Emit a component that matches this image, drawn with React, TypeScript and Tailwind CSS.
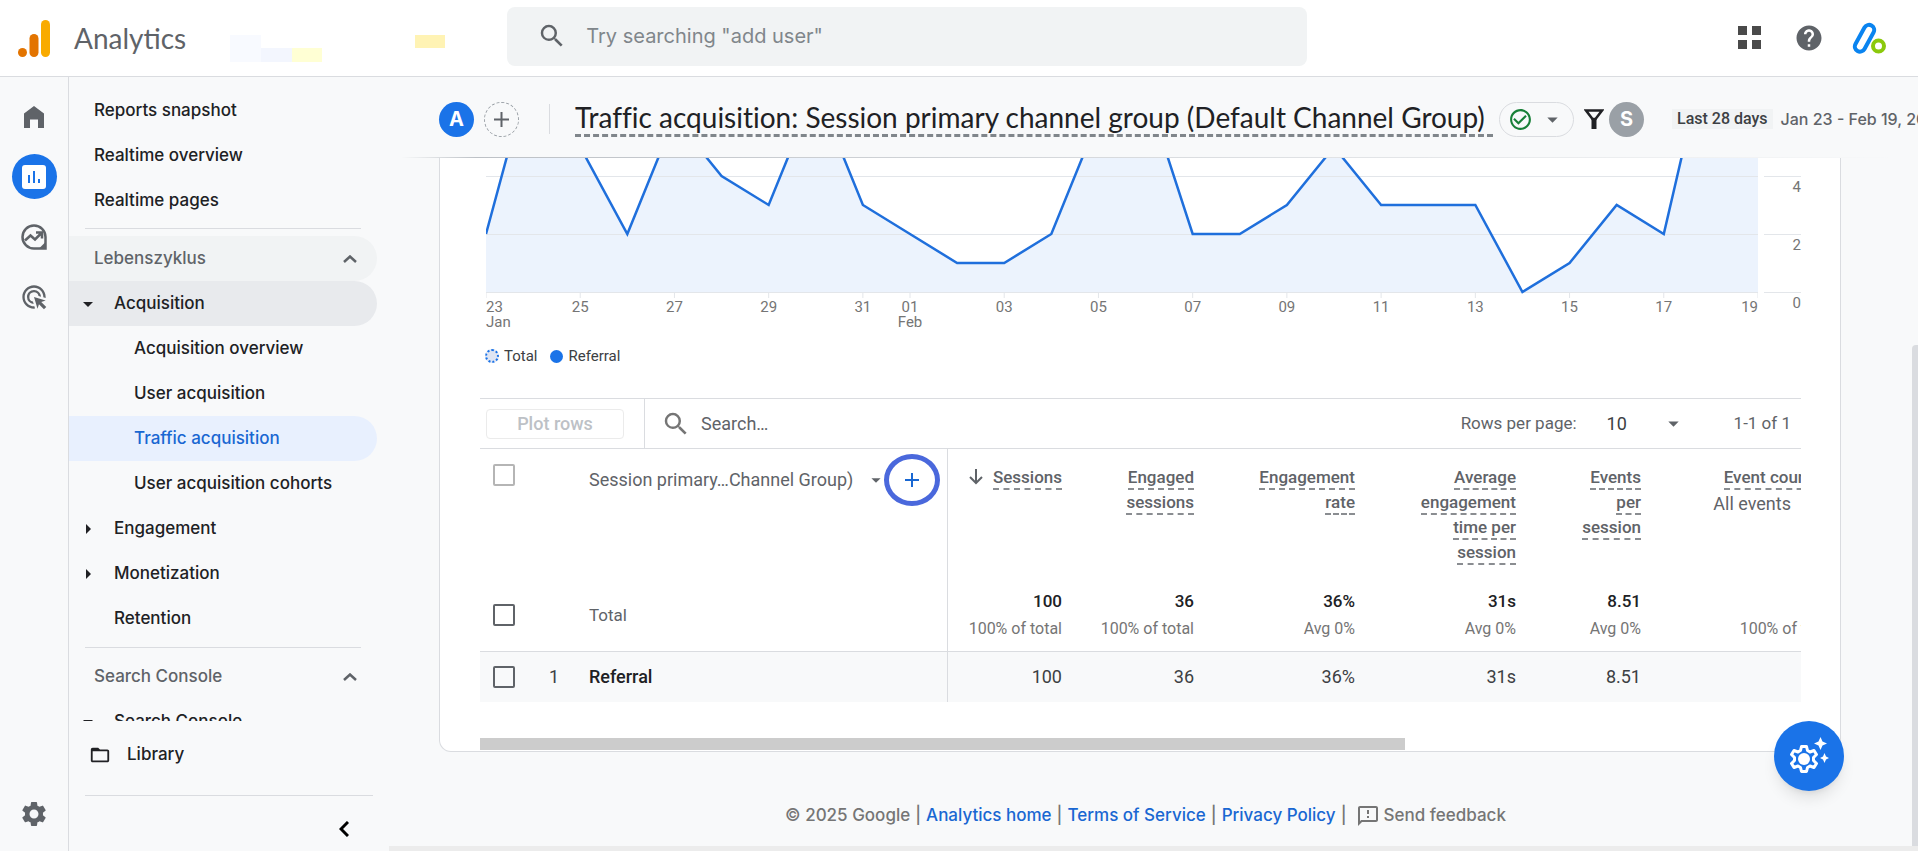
import { Fragment } from "react";
import { MdAdsClick, MdArrowDropDown, MdArrowRight, MdCheckCircleOutline, MdFolderOpen, MdHelp, MdOutlineFeedback, MdSearch, MdSettings } from "react-icons/md";

// sessions per day, Jan 23 - Feb 19
const sessions = [2, 8, 5, 2, 6, 4, 3, 7, 3, 2, 1, 1, 2, 6, 7, 2, 2, 3, 5, 3, 3, 3, 0, 1, 3, 2, 9, 7];

const UNIT = 29; // px per session
const BASE = 134; // y of the zero line

const ticks = [
    { day: 0, label: "23", month: "Jan" },
    { day: 2, label: "25" },
    { day: 4, label: "27" },
    { day: 6, label: "29" },
    { day: 8, label: "31" },
    { day: 9, label: "01", month: "Feb" },
    { day: 11, label: "03" },
    { day: 13, label: "05" },
    { day: 15, label: "07" },
    { day: 17, label: "09" },
    { day: 19, label: "11" },
    { day: 21, label: "13" },
    { day: 23, label: "15" },
    { day: 25, label: "17" },
    { day: 27, label: "19" },
];

const columns = [
    { title: ["Sessions"], total: "100", note: "100% of total", value: "100", width: "w-[115px]", sorted: true },
    { title: ["Engaged", "sessions"], total: "36", note: "100% of total", value: "36", width: "w-[132px]" },
    { title: ["Engagement", "rate"], total: "36%", note: "Avg 0%", value: "36%", width: "w-[161px]" },
    { title: ["Average", "engagement", "time per", "session"], total: "31s", note: "Avg 0%", value: "31s", width: "w-[161px]" },
    { title: ["Events", "per", "session"], total: "8.51", note: "Avg 0%", value: "8.51", width: "w-[125px]" },
];

const HomeIcon = () => (
    <svg viewBox="0 0 20 22" className="w-5 h-[22px]" fill="#5f6368">
        <path d="M0 22V7.500L10 0l10 7.500V22h-6v-8.500H6V22z" />
    </svg>
);

const ReportsIcon = () => (
    <svg viewBox="0 0 24 24" className="w-6 h-6">
        <rect width="24" height="24" rx="3" fill="#fff" />
        <path d="M7 10v8M12 6v12M17 14v4" stroke="#1a73e8" strokeWidth="2" />
    </svg>
);

const ExploreIcon = () => (
    <svg viewBox="0 0 26 26" className="w-[26px] h-[26px]" fill="none" stroke="#5f6368" strokeWidth="2.500">
        <path d="M24.500 13A11.500 11.500 0 1 0 13 24.500h11.500z" />
        <path d="M4 16.500l5.500-5 4.500 4L20.500 9M15 8.500h6v6" />
        <path d="M18 24.500l6.500-6.500v6.500z" fill="#5f6368" stroke="none" />
    </svg>
);

const ChevronUp = () => (
    <svg viewBox="0 0 14 8" className="w-[14px] h-2" fill="none" stroke="#5f6368" strokeWidth="2.500">
        <path d="M1 7l6-5.500L13 7" />
    </svg>
);

const Logo = () => (
    <svg viewBox="0 0 32 37" className="w-8 h-[37px]">
        <rect x="23" width="9" height="37" rx="4.500" fill="#f9ab00" />
        <rect x="11.500" y="14" width="9" height="23" rx="4.500" fill="#e37400" />
        <circle cx="4.500" cy="32.500" r="4.500" fill="#e37400" />
    </svg>
);

const AccountLogo = () => (
    <svg viewBox="0 0 34 32" className="w-[34px] h-8" fill="none" strokeWidth="4">
        <path d="M12.500 5.500a5 5 0 0 1 9 5L12.500 27a5 5 0 0 1-9-5z" stroke="#0a84f0" />
        <circle cx="26.500" cy="24" r="5.500" stroke="#8bc90c" fill="#fff" />
    </svg>
);

const FunnelIcon = () => (
    <svg viewBox="0 0 20 20" className="w-5 h-5" fill="none" stroke="#202124" strokeWidth="2.500">
        <path d="M2 1.500h16l-6.500 8.500h-3z" />
        <path d="M10 9v11" strokeWidth="5" />
    </svg>
);

const InsightsIcon = () => (
    <svg viewBox="0 0 40 38" className="w-10 h-[38px]" fill="#fff">
        <path
            d="M12.500 9.500h5l1 4 2.500 1.500 4-1.500 2.500 4-3 3v3l3 3-2.500 4-4-1.500-2.500 1.500-1 4h-5l-1-4L9 29l-4 1.500-2.500-4 3-3v-3l-3-3L5 13.500 9 15l2.500-1.500z"
            fill="none"
            stroke="#fff"
            strokeWidth="3"
            strokeLinejoin="round"
        />
        <circle cx="15" cy="22" r="6" />
        <path d="M31.500 0l2 4.500 4.500 2-4.500 2-2 4.500-2-4.500-4.500-2 4.500-2zM35.500 16l1.500 3.500 3 1.500-3 1.500-1.500 3.500-1.500-3.500-3-1.500 3-1.500z" />
    </svg>
);

const Checkbox = ({ label, muted }: { label: string; muted?: boolean }) => (
    <input
        type="checkbox"
        aria-label={label}
        className={`block appearance-none w-[22px] h-[22px] border-2 rounded-xs ${muted ? "border-[#b5b5b5]" : "border-[#5f6368]"}`}
    />
);

const NavItem = ({ text, className = "", arrow }: { text: string; className?: string; arrow?: "down" | "right" }) => (
    <a href="#" className={`flex items-center shrink-0 h-[45px] mr-3 rounded-r-full ${className}`}>
        {arrow && (
            <span className="w-[45px] pl-[7px]">
                {arrow === "down" ? <MdArrowDropDown size={24} /> : <MdArrowRight size={24} />}
            </span>
        )}
        {text}
    </a>
);

const Header = () => (
    <header className="flex items-center shrink-0 h-[77px] bg-white border-b border-[#dadce0] px-[18px]">
        <Logo />
        <span className="ml-6 pb-px text-[28px] text-[#5f6368] font-['Lato',sans-serif]">Analytics</span>
        <div className="grid grid-cols-7 w-[215px] h-[27px] ml-11 mt-5" aria-hidden="true">
            <span className="bg-[#f8faff]" />
            <span className="col-span-5" />
            <span className="bg-[#fff3b4]" />
            <span className="bg-[#f8faff]" />
            <span className="bg-[#f3f6fe]" />
            <span className="bg-[#ffffd4]" />
        </div>
        <label className="flex items-center w-[800px] h-[59px] ml-[62px] mb-1 bg-[#f1f3f4] rounded-lg px-[30px]">
            <MdSearch size={30} className="text-[#5f6368]" />
            <input
                type="text"
                aria-label="Search"
                placeholder={'Try searching "add user"'}
                className="flex-1 ml-[19px] text-xl bg-transparent outline-none placeholder:text-[#80868b]"
            />
        </label>
        <div className="flex items-center gap-7 ml-auto mr-[14px] pb-px">
            <button aria-label="Apps" className="flex justify-center w-[34px]">
                <svg viewBox="0 0 23 23" className="w-[23px] h-[23px]" fill="#4a4a4a">
                    <path d="M0 0h9v9H0zM14 0h9v9h-9zM0 14h9v9H0zM14 14h9v9h-9z" />
                </svg>
            </button>
            <button aria-label="Help">
                <MdHelp size={30} className="text-[#5f6368]" />
            </button>
            <button aria-label="Account">
                <AccountLogo />
            </button>
        </div>
    </header>
);

const Rail = () => (
    <nav className="flex flex-col items-center shrink-0 w-[69px] border-r border-[#dadce0] pt-[17px] pb-[22px]">
        <a href="#" aria-label="Home" className="flex items-center justify-center h-[45px]"><HomeIcon /></a>
        <a href="#" aria-label="Reports" className="flex items-center justify-center w-[45px] h-[45px] mt-[15px] rounded-full bg-[#1a73e8]"><ReportsIcon /></a>
        <a href="#" aria-label="Explore" className="flex items-center justify-center h-[45px] mt-[15px]"><ExploreIcon /></a>
        <a href="#" aria-label="Advertising" className="flex items-center justify-center h-[45px] mt-[15px] text-[#5f6368]"><MdAdsClick size={28} /></a>
        <a href="#" aria-label="Admin" className="mt-auto text-[#5f6368]"><MdSettings size={30} /></a>
    </nav>
);

const Sidebar = () => (
    <aside className="flex flex-col shrink-0 w-[320px] text-[17px] text-[#202124] font-medium">
        <div className="flex flex-col flex-1 min-h-0 overflow-hidden pt-[11px]">
            <NavItem text="Reports snapshot" className="pl-[25px]" />
            <NavItem text="Realtime overview" className="pl-[25px]" />
            <NavItem text="Realtime pages" className="pl-[25px]" />
            <hr className="shrink-0 border-[#dadce0] ml-4 mr-7 mt-[5px] mb-[7px]" />
            <button className="flex items-center justify-between shrink-0 h-[45px] mr-3 pl-[25px] pr-5 rounded-r-full bg-[#f1f3f4] text-[#5f6368]">
                Lebenszyklus <ChevronUp />
            </button>
            <NavItem text="Acquisition" arrow="down" className="bg-[#e8eaed]" />
            <NavItem text="Acquisition overview" className="pl-[65px]" />
            <NavItem text="User acquisition" className="pl-[65px]" />
            <NavItem text="Traffic acquisition" className="pl-[65px] bg-[#e8f0fe] text-[#1967d2]" />
            <NavItem text="User acquisition cohorts" className="pl-[65px]" />
            <NavItem text="Engagement" arrow="right" />
            <NavItem text="Monetization" arrow="right" />
            <NavItem text="Retention" className="pl-[45px]" />
            <hr className="shrink-0 border-[#dadce0] ml-4 mr-7 mt-[6px] mb-[6px]" />
            <button className="flex items-center justify-between shrink-0 h-[45px] mr-3 pl-[25px] pr-5 text-[#5f6368]">
                Search Console <ChevronUp />
            </button>
            <NavItem text="Search Console" arrow="down" />
        </div>
        <a href="#" className="flex items-center shrink-0 gap-4 h-[66px] pl-5 pt-px">
            <MdFolderOpen size={22} /> Library
        </a>
        <div className="shrink-0 h-14 mt-2 ml-4 mr-4 border-t border-[#dadce0]">
            <button aria-label="Collapse navigation" className="block ml-auto mr-6 mt-[25px]">
                <svg viewBox="0 0 10 16" className="w-[10px] h-4" fill="none" stroke="#000" strokeWidth="3">
                    <path d="M9 1L2 8l7 7" />
                </svg>
            </button>
        </div>
    </aside>
);

const ReportHeader = () => (
    <div className="shrink-0 bg-[#f8f9fa]">
        <div className="flex items-center h-20 pt-1 pl-[50px] whitespace-nowrap overflow-hidden">
            <span className="flex items-center justify-center shrink-0 w-[35px] h-[35px] rounded-full bg-[#1a73e8] text-white text-xl font-bold">A</span>
            <button aria-label="Add comparison" className="flex items-center justify-center shrink-0 w-[35px] h-[35px] ml-[10px] rounded-full border border-dashed border-[#9aa0a6]">
                <svg viewBox="0 0 15 15" className="w-[15px] h-[15px]" stroke="#5f6368" strokeWidth="2">
                    <path d="M7.500 0v15M0 7.500h15" />
                </svg>
            </button>
            <span className="shrink-0 w-px h-[30px] ml-[30px] mr-[25px] bg-[#dadce0]" />
            <h1 className="shrink-0 min-w-[918px] text-[28px] leading-[33px] text-[#202124] border-b-3 border-dashed border-[#80868b] font-['Lato',sans-serif] [font-variant-ligatures:none]">
                Traffic acquisition: Session primary channel group (Default Channel Group)
            </h1>
            <button aria-label="Report status" className="flex items-center justify-between shrink-0 w-[75px] h-[35px] ml-[6px] pl-2 pr-2 rounded-full border border-[#dadce0] text-[#5f6368]">
                <MdCheckCircleOutline size={25} className="text-[#188038]" />
                <MdArrowDropDown size={25} />
            </button>
            <button aria-label="Filter" className="shrink-0 ml-[10px]"><FunnelIcon /></button>
            <span className="flex items-center justify-center shrink-0 w-[35px] h-[35px] ml-[5px] rounded-full bg-[#9aa0a6] text-white text-xl font-bold">S</span>
            <span className="shrink-0 ml-7 px-[5px] bg-[#f1f3f4] text-base leading-5 font-medium text-[#3c4043] font-['Roboto',sans-serif]">Last 28 days</span>
            <span className="shrink-0 ml-2 text-base font-medium text-[#5f6368]">Jan 23 - Feb 19, 2025</span>
        </div>
        <div className="h-px ml-3 mr-5 bg-linear-to-r from-transparent via-[#bdc1c6] via-5% to-transparent" />
    </div>
);

const Chart = () => {
    const last = sessions.length - 1;
    const line = sessions.map((v, i) => `${i},${BASE - v * UNIT}`).join(" ");

    return (
        <div className="flex gap-[6px] ml-[6px]">
            <div className="flex-1">
                <svg viewBox={`0 0 ${last} 140`} preserveAspectRatio="none" className="block w-full h-[140px]">
                    <polygon points={`0,${BASE} ${line} ${last},${BASE}`} fill="#ecf3fd" />
                    {[0, 2, 4].map((v) => (
                        <path key={v} d={`M0 ${BASE - v * UNIT}.5H${last}`} stroke="#e3e6ea" vectorEffect="non-scaling-stroke" />
                    ))}
                    {ticks.map((t) => (
                        <path key={t.day} d={`M${t.day} ${BASE}v6`} stroke="#e3e6ea" vectorEffect="non-scaling-stroke" />
                    ))}
                    <polyline points={line} fill="none" stroke="#1f6fdc" strokeWidth="2.500" vectorEffect="non-scaling-stroke" />
                </svg>
                <div className="relative h-10 text-[15px] leading-[15px] text-[#757575]">
                    {ticks.map((t) => (
                        <span
                            key={t.day}
                            className={`absolute top-[2px] ${t.day === 0 ? "text-left" : t.day === last ? "-translate-x-full" : "-translate-x-1/2 text-center"}`}
                            style={{ left: `${(t.day / last) * 100}%` }}
                        >
                            {t.label}
                            {t.month && <><br />{t.month}</>}
                        </span>
                    ))}
                </div>
            </div>
            <div className="w-[37px] pt-[18px] text-right text-[15px] leading-[21px] text-[#757575]">
                <div className="h-[58px] border-t border-[#e3e6ea]">4</div>
                <div className="h-[58px] border-t border-[#e3e6ea]">2</div>
                <div className="border-t border-[#e3e6ea]">0</div>
            </div>
        </div>
    );
};

const Underlined = ({ text }: { text: string }) => (
    <span className="border-b-2 border-dashed border-[#8a8d91] pb-px">{text}</span>
);

const DataTable = () => (
    <table className="w-[calc(100%+32px)] table-fixed border-collapse text-[#3c4043]">
        <thead>
            <tr className="align-top text-[17px] leading-[25px] text-[#5f6368]">
                <th className="w-[52px] pt-[15px] pl-[13px]"><Checkbox label="Select all" muted /></th>
                <th className="w-[57px]"></th>
                <th className="w-[358px] h-[131px] border-r border-[#dadce0] font-normal">
                    <div className="flex items-center pt-[5px]">
                        <button className="text-left whitespace-nowrap text-lg">Session primary…Channel Group)</button>
                        <MdArrowDropDown size={22} className="ml-auto" />
                        <button aria-label="Add dimension" className="flex items-center justify-center w-[56px] h-[52px] mr-[7px] -ml-[3px] rounded-[50%] border-5 border-[#4a68dc]">
                            <svg viewBox="0 0 14 14" className="w-[14px] h-[14px]" stroke="#1967d2" strokeWidth="2">
                                <path d="M7 0v14M0 7h14" />
                            </svg>
                        </button>
                    </div>
                </th>
                {columns.map((c) => (
                    <th key={c.title.join(" ")} className={`${c.width} pt-4 text-right font-medium`}>
                        {c.title.map((l, i) => (
                            <Fragment key={l}>
                                {i > 0 && <br />}
                                {c.sorted && (
                                    <svg viewBox="0 0 14 16" className="inline w-[14px] h-4 mr-[10px] mb-1" fill="none" stroke="#5f6368" strokeWidth="2">
                                        <path d="M7 0v14M1 8l6 6 6-6" />
                                    </svg>
                                )}
                                <Underlined text={l} />
                            </Fragment>
                        ))}
                    </th>
                ))}
                <th className="pt-4 text-right font-medium">
                    <div className="pr-5"><Underlined text="Event count" /></div>
                    <div className="pr-[42px] pt-px text-lg leading-[25px] font-normal">All events</div>
                </th>
            </tr>
        </thead>
        <tbody>
            <tr className="h-[71px] border-b border-[#dadce0]">
                <td className="pl-[13px]"><Checkbox label="Select total" /></td>
                <td></td>
                <td className="border-r border-[#dadce0] text-[17px] text-[#5f6368]">Total</td>
                {columns.map((c) => (
                    <td key={c.title.join(" ")} className="text-right whitespace-nowrap">
                        <div className="text-[17px] leading-7 font-medium text-[#202124]">{c.total}</div>
                        <div className="text-base leading-7 text-[#757575]">{c.note}</div>
                    </td>
                ))}
                <td className="text-right whitespace-nowrap">
                    <div className="text-[17px] leading-7 font-medium text-[#202124]">100</div>
                    <div className="text-base leading-7 text-[#757575]">100% of total</div>
                </td>
            </tr>
            <tr className="h-[51px] bg-[#f8f9fa] text-lg">
                <td className="pl-[13px]"><Checkbox label="Select row 1" /></td>
                <td className="pl-[17px]">1</td>
                <td className="border-r border-[#dadce0] font-medium text-[#202124]">Referral</td>
                {columns.map((c) => (
                    <td key={c.title.join(" ")} className="text-right">{c.value}</td>
                ))}
                <td className="text-right">100</td>
            </tr>
        </tbody>
    </table>
);

const ReportCard = () => (
    <section className="bg-white border border-t-0 border-[#dadce0] rounded-b-xl ml-[50px] mr-[77px] pl-10 pr-[39px] font-['Roboto',sans-serif]">
        <Chart />
        <div className="flex items-center gap-3 ml-[5px] mt-[8px] text-[15px] leading-5 text-[#3c4043]">
            <span className="flex items-center gap-[5px]">
                <span className="w-[14px] h-[14px] rounded-full border-2 border-dotted border-[#1a73e8] bg-[#dfe5f3]" />Total
            </span>
            <span className="flex items-center gap-[6px]">
                <span className="w-[13px] h-[13px] rounded-full bg-[#1a73e8]" />Referral
            </span>
        </div>
        <div className="flex items-center h-[51px] mt-8 border-y border-[#dadce0] text-[#5f6368]">
            <div className="flex items-center h-full pl-[6px] pr-5 border-r border-[#dadce0]">
                <button disabled className="w-[138px] h-[30px] border border-[#ebebeb] rounded text-[18px] font-medium text-[#bdc1c6]">Plot rows</button>
            </div>
            <label className="flex items-center flex-1 pl-[16px]">
                <MdSearch size={30} className="text-[#757575]" />
                <input type="text" aria-label="Search table" placeholder="Search…" className="flex-1 ml-[10px] text-[18px] outline-none placeholder:text-[#5f6368]" />
            </label>
            <label htmlFor="rows" className="text-[17px]">Rows per page:</label>
            <div className="flex items-center ml-[30px]">
                <select id="rows" className="appearance-none w-[54px] text-lg text-[#3c4043] outline-none">
                    <option>10</option>
                </select>
                <MdArrowDropDown size={25} />
            </div>
            <span className="ml-12 mr-[10px] text-[17px]">1-1 of 1</span>
        </div>
        <div className="overflow-hidden">
            <DataTable />
        </div>
        <div className="w-[70%] h-3 mt-9 mb-px bg-[#ccc]" />
    </section>
);

const Footer = () => (
    <footer className="flex items-center justify-center gap-[5px] mt-[51px] pr-4 text-[17px] font-medium text-[#757575]">
        <span>© 2025 Google</span>|
        <a href="#" className="text-[#1967d2]">Analytics home</a>|
        <a href="#" className="text-[#1967d2]">Terms of Service</a>|
        <a href="#" className="text-[#1967d2]">Privacy Policy</a>|
        <button className="flex items-center gap-1 ml-1"><MdOutlineFeedback size={24} /> Send feedback</button>
    </footer>
);

const App = () => {
    return (
        <div className="flex flex-col h-screen overflow-hidden bg-[#f8f9fa] font-['Inter',sans-serif]">
            <Header />
            <div className="flex flex-1 min-h-0">
                <Rail />
                <Sidebar />
                <main className="relative flex flex-col flex-1 min-w-0">
                    <ReportHeader />
                    <div className="flex-1 min-h-0 overflow-hidden">
                        <ReportCard />
                        <Footer />
                    </div>
                    <div className="h-[5px] bg-[#ececec]" />
                    <div className="absolute right-0 top-[268px] bottom-[5px] w-[6px] bg-[#dadce0] rounded-tl-sm" />
                    <button aria-label="Customize report" className="absolute right-[74px] bottom-[60px] flex items-center justify-center w-[70px] h-[70px] rounded-full bg-[#1a73e8] shadow-lg">
                        <InsightsIcon />
                    </button>
                </main>
            </div>
        </div>
    );
};

export default App;
